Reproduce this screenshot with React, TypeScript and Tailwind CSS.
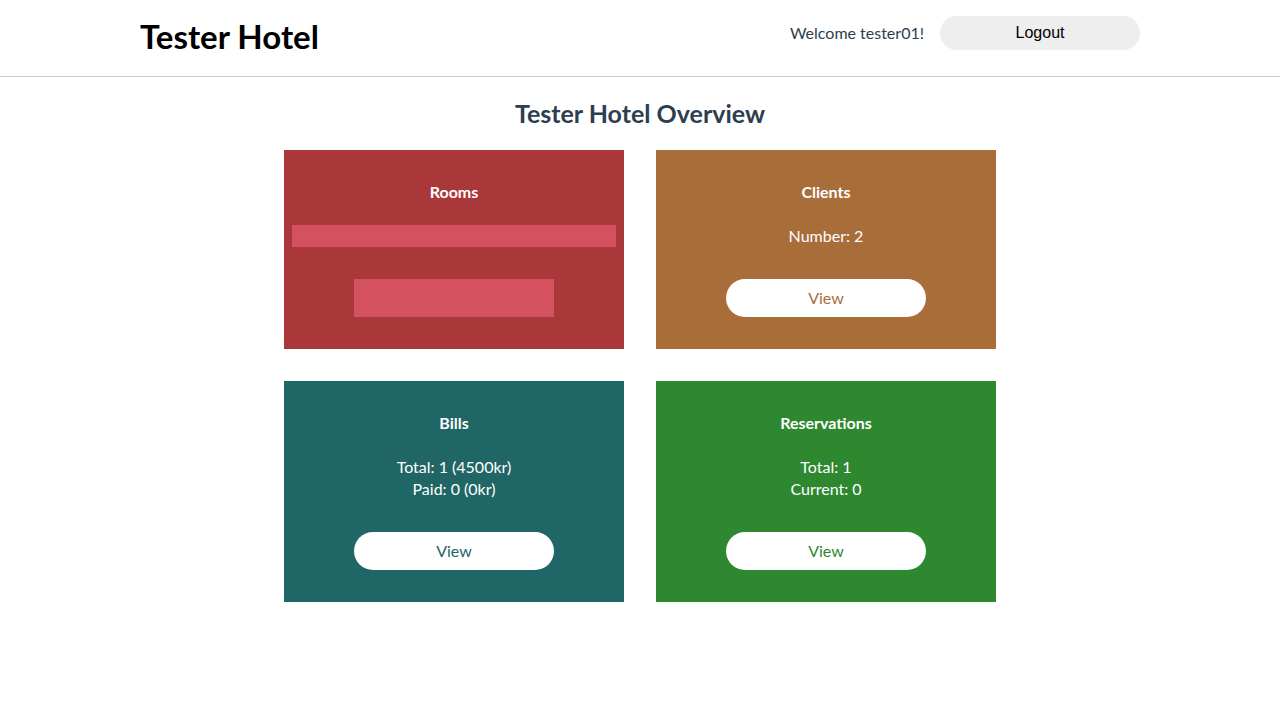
import React from "react";

type CardProps = {
  title: string;
  bg: string;
  text: string;
  lines?: string[];
  placeholder?: boolean;
};

function Card({ title, bg, text, lines, placeholder }: CardProps) {
  return (
    <div className={`${bg} flex w-[340px] flex-col items-center px-2 pt-[32px] pb-[32px] text-white`}>
      <h3 className="h-[20px] text-[16px] leading-[20px] font-bold">{title}</h3>
      {placeholder ? (
        <>
          <div className="mt-[23px] h-[22px] w-full bg-[#d4525f]" />
          <div className="mt-[32px] h-[38px] w-[200px] bg-[#d4525f]" />
        </>
      ) : (
        <>
          <div className="mt-[23px] text-center text-[16px] leading-[22px] font-normal">
            {lines?.map((l) => (
              <div key={l}>{l}</div>
            ))}
          </div>
          <button
            className={`mt-[32px] h-[38px] w-[200px] rounded-full bg-white text-[16px] font-normal ${text}`}
          >
            View
          </button>
        </>
      )}
    </div>
  );
}

export default function App() {
  return (
    <div className="min-h-screen bg-white font-['Lato','Noto_Sans',sans-serif]">
      <header className="border-b border-[#cccccc]">
        <div className="mx-auto flex h-[76px] w-[1000px] items-start justify-between pt-[16px]">
          <h1 className="text-[33px] leading-[40px] font-bold text-black">Tester Hotel</h1>
          <div className="flex items-center gap-4">
            <span className="text-[16px] leading-[34px] text-[#2c3e50]">Welcome tester01!</span>
            <button className="h-[34px] w-[200px] rounded-full bg-[#eeeeee] font-['Liberation_Sans',Arial,sans-serif] text-[16px] text-black">
              Logout
            </button>
          </div>
        </div>
      </header>
      <main className="flex flex-col items-center">
        <h2 className="mt-[21px] h-[30px] text-[25px] leading-[30px] font-bold text-[#2c3e50]">
          Tester Hotel Overview
        </h2>
        <div className="mt-[22px] grid grid-cols-[340px_340px] gap-[32px]">
          <Card title="Rooms" bg="bg-[#aa383a]" text="" placeholder />
          <Card title="Clients" bg="bg-[#a96d3a]" text="text-[#a96d3a]" lines={["Number: 2"]} />
          <Card
            title="Bills"
            bg="bg-[#216666]"
            text="text-[#216666]"
            lines={["Total: 1 (4500kr)", "Paid: 0 (0kr)"]}
          />
          <Card
            title="Reservations"
            bg="bg-[#2e8830]"
            text="text-[#2e8830]"
            lines={["Total: 1", "Current: 0"]}
          />
        </div>
      </main>
    </div>
  );
}
